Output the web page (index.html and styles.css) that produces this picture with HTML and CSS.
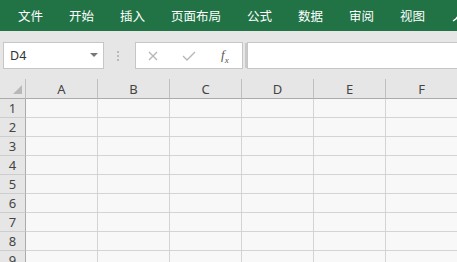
FILE: index.html
```html
<!DOCTYPE html>
<html lang="zh-CN">
<head>
    <meta charset="UTF-8">
    <title>工作簿1 - Excel</title>
    <link rel="stylesheet" href="styles.css">
</head>
<body>
    <nav class="ribbon">
        <span class="tab">文件</span>
        <span class="tab">开始</span>
        <span class="tab">插入</span>
        <span class="tab">页面布局</span>
        <span class="tab">公式</span>
        <span class="tab">数据</span>
        <span class="tab">审阅</span>
        <span class="tab">视图</span>
        <svg class="tell-icon" width="12" height="14" viewBox="0 0 12 14">
            <path d="M10 1 L4 10 M5 9 L1 12" stroke="#fff" stroke-width="1.4" fill="none"/>
        </svg>
    </nav>

    <div class="formula-bar">
        <div class="name-box">
            <span>D4</span>
            <svg width="8" height="5" viewBox="0 0 8 5"><path d="M0 0 H8 L4 4 Z" fill="#777"/></svg>
        </div>
        <div class="grip">
            <i></i><i></i><i></i>
        </div>
        <div class="fx-box">
            <svg class="btn-cancel" width="12" height="12" viewBox="0 0 12 12">
                <path d="M2 2 L10 10 M10 2 L2 10" stroke="#b5b5b5" stroke-width="1.3" fill="none"/>
            </svg>
            <svg class="btn-enter" width="14" height="12" viewBox="0 0 14 12">
                <path d="M1 6 L5 10 L13 2" stroke="#b5b5b5" stroke-width="1.3" fill="none"/>
            </svg>
            <span class="fx">f<sub>x</sub></span>
        </div>
        <div class="formula-input"></div>
    </div>

    <div class="sheet">
        <div class="corner"><span class="corner-tri"></span></div>
        <div class="col-head">A</div>
        <div class="col-head">B</div>
        <div class="col-head">C</div>
        <div class="col-head">D</div>
        <div class="col-head">E</div>
        <div class="col-head">F</div>
    </div>

    <script>
        // build rows 1-9 of the grid
        const sheet = document.querySelector('.sheet');
        for (let r = 1; r <= 9; r++) {
            const head = document.createElement('div');
            head.className = 'row-head';
            head.textContent = r;
            sheet.appendChild(head);
            for (let c = 0; c < 6; c++) {
                const cell = document.createElement('div');
                cell.className = 'cell';
                sheet.appendChild(cell);
            }
        }
    </script>
</body>
</html>
```

FILE: styles.css
```css
body {
    margin: 0;
    width: 457px;
    height: 262px;
    overflow: hidden;
    background-color: #f8f8f8;
    font-family: "Noto Sans CJK SC", "Noto Sans", sans-serif;
}

.ribbon {
    height: 31px;
    background-color: #217346;
    display: flex;
    align-items: center;
    padding-left: 5px;
    white-space: nowrap;
}

.tab {
    color: #fff;
    font-size: 12.5px;
    padding: 0 13px;
    line-height: 30px;
}

.tell-icon {
    margin-left: 14px;
    flex: none;
}

.formula-bar {
    height: 48px;
    background-color: #e6e6e6;
    display: flex;
    padding-top: 11px;
    box-sizing: border-box;
}

.name-box {
    margin-left: 3px;
    width: 101px;
    height: 27px;
    box-sizing: border-box;
    background-color: #fff;
    border: 1px solid #c6c6c6;
    display: flex;
    align-items: center;
    justify-content: space-between;
    padding: 0 5px 0 6px;
    font-family: "Noto Sans", sans-serif;
    font-size: 12.5px;
    color: #333;
}

.grip {
    width: 28px;
    padding-right: 3px;
    display: flex;
    flex-direction: column;
    align-items: center;
    justify-content: center;
    gap: 2px;
    height: 27px;
}

.grip i {
    display: block;
    width: 2px;
    height: 2px;
    background-color: #b9b9b9;
}

.fx-box {
    width: 108px;
    height: 27px;
    box-sizing: border-box;
    background-color: #fff;
    border: 1px solid #c6c6c6;
    display: flex;
    align-items: center;
    padding-left: 11px;
}

.btn-enter {
    margin-left: 23px;
}

.fx {
    margin-left: 25px;
    font-family: "Liberation Serif", serif;
    font-style: italic;
    font-size: 13px;
    color: #555;
}

.fx sub {
    font-size: 9px;
}

.formula-input {
    flex: 1;
    height: 27px;
    box-sizing: border-box;
    margin-left: 4px;
    background-color: #fff;
    border: 1px solid #c6c6c6;
    border-right: none;
    box-shadow: -3px 0 0 -1px #c9c9c9;
}

.sheet {
    display: grid;
    grid-template-columns: 26px repeat(6, 72px);
    grid-template-rows: 20px;
    grid-auto-rows: 19px;
    font-family: "Noto Sans", sans-serif;
    font-size: 13px;
    color: #444;
}

.corner, .col-head, .row-head {
    background-color: #e6e6e6;
    box-sizing: border-box;
}

.corner {
    border-right: 1px solid #c0c0c0;
    border-bottom: 1px solid #ababab;
    position: relative;
}

.corner-tri {
    position: absolute;
    right: 3px;
    bottom: 4px;
    width: 0;
    height: 0;
    border-left: 9px solid transparent;
    border-bottom: 9px solid #b8b8b8;
}

.col-head {
    border-right: 1px solid #c0c0c0;
    border-bottom: 1px solid #ababab;
    text-align: center;
    line-height: 20px;
}

.row-head {
    border-right: 1px solid #ababab;
    border-bottom: 1px solid #cdcdcd;
    text-align: center;
    line-height: 19px;
}

.cell {
    border-right: 1px solid #d4d4d4;
    border-bottom: 1px solid #d4d4d4;
    box-sizing: border-box;
}
```
